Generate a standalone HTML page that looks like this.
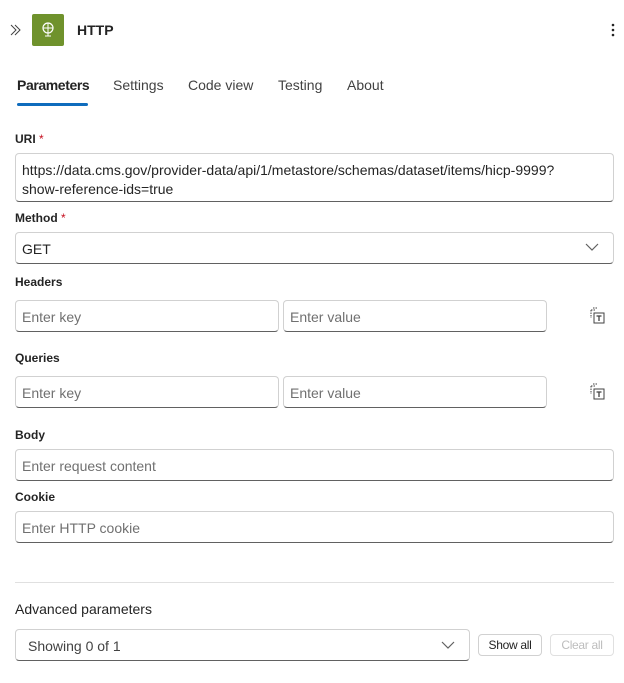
<!DOCTYPE html>
<html><head><style>
body{margin:0;width:624px;height:683px;background:#fff;font-family:"Liberation Sans",sans-serif;color:#242424;position:relative;overflow:hidden}
.a{position:absolute}
.lbl{position:absolute;left:15px;font-size:12px;font-weight:bold;color:#242424}
.lbl span{color:#c50f1f;font-weight:normal}
.in{position:absolute;box-sizing:border-box;border:1px solid #d1d1d1;border-bottom-color:#616161;border-radius:4px;font-size:14px;color:#707070;padding-left:6px;padding-top:2px;display:flex;align-items:center}
.tab{position:absolute;top:77px;font-size:14px;color:#424242}
.ic{position:absolute;width:20px;height:20px}
.btn{position:absolute;top:634px;height:22px;box-sizing:border-box;border:1px solid #d1d1d1;border-radius:4px;font-size:12px;display:flex;align-items:center;justify-content:center;letter-spacing:-0.3px}
</style></head><body>
<svg class="a" style="left:9px;top:24px" width="14" height="12" viewBox="0 0 14 12"><path d="M2 1l5 5-5 5M6 1l5 5-5 5" fill="none" stroke="#424242" stroke-width="1"/></svg>
<div class="a" style="left:32px;top:14px;width:32px;height:32px;background:#6f922c;border-radius:2px"></div>
<svg class="a" style="left:40px;top:21px" width="16" height="18" viewBox="0 0 16 18"><circle cx="8" cy="7" r="5" fill="none" stroke="#fff" stroke-width="1.2"/><path d="M3 7h10M8 2v10M8 12v3M5 15h6" fill="none" stroke="#fff" stroke-width="1"/></svg>
<div class="a" style="left:77px;top:22px;font-size:14px;font-weight:bold">HTTP</div>
<svg class="a" style="left:610px;top:22px" width="6" height="16"><circle cx="3" cy="3" r="1.3" fill="#242424"/><circle cx="3" cy="8" r="1.3" fill="#242424"/><circle cx="3" cy="13" r="1.3" fill="#242424"/></svg>
<div class="tab" style="left:17px;color:#242424;font-weight:bold;letter-spacing:-0.4px">Parameters</div>
<div class="tab" style="left:113px">Settings</div>
<div class="tab" style="left:188px">Code view</div>
<div class="tab" style="left:278px">Testing</div>
<div class="tab" style="left:347px">About</div>
<div class="a" style="left:17px;top:103px;width:71px;height:3px;background:#0f6cbd;border-radius:2px"></div>

<div class="lbl" style="top:132px">URI <span>*</span></div>
<div class="in" style="left:15px;top:153px;width:599px;height:49px;color:#242424;align-items:flex-start;padding-top:7px;line-height:19px">https://data.cms.gov/provider-data/api/1/metastore/schemas/dataset/items/hicp-9999?<br>show-reference-ids=true</div>
<div class="lbl" style="top:211px">Method <span>*</span></div>
<div class="in" style="left:15px;top:232px;width:599px;height:32px;color:#242424">GET</div>
<svg class="a" style="left:585px;top:242px" width="14" height="10"><path d="M1 2l6 6 6-6" fill="none" stroke="#616161" stroke-width="1.2"/></svg>

<div class="lbl" style="top:275px">Headers</div>
<div class="in" style="left:15px;top:300px;width:264px;height:32px">Enter key</div>
<div class="in" style="left:283px;top:300px;width:264px;height:32px">Enter value</div>
<svg class="ic" style="left:588px;top:306px" viewBox="0 0 20 20"><path d="M3 4h5M3 4v8M5 2h4" fill="none" stroke="#424242" stroke-dasharray="1.5 1"/><rect x="6" y="7" width="10" height="10" fill="none" stroke="#424242"/><path d="M8.5 10h5M11 10v5" stroke="#424242" stroke-width="1.3"/></svg>
<div class="lbl" style="top:351px">Queries</div>
<div class="in" style="left:15px;top:376px;width:264px;height:32px">Enter key</div>
<div class="in" style="left:283px;top:376px;width:264px;height:32px">Enter value</div>
<svg class="ic" style="left:588px;top:382px" viewBox="0 0 20 20"><path d="M3 4h5M3 4v8M5 2h4" fill="none" stroke="#424242" stroke-dasharray="1.5 1"/><rect x="6" y="7" width="10" height="10" fill="none" stroke="#424242"/><path d="M8.5 10h5M11 10v5" stroke="#424242" stroke-width="1.3"/></svg>

<div class="lbl" style="top:428px">Body</div>
<div class="in" style="left:15px;top:449px;width:599px;height:32px">Enter request content</div>
<div class="lbl" style="top:490px">Cookie</div>
<div class="in" style="left:15px;top:511px;width:599px;height:32px">Enter HTTP cookie</div>

<div class="a" style="left:15px;top:582px;width:599px;height:1px;background:#e0e0e0"></div>
<div class="a" style="left:15px;top:601px;font-size:14px;color:#242424">Advanced parameters</div>
<div class="in" style="left:15px;top:629px;width:455px;height:32px;padding-left:12px;color:#424242">Showing 0 of 1</div>
<svg class="a" style="left:441px;top:640px" width="14" height="10"><path d="M1 2l6 6 6-6" fill="none" stroke="#616161" stroke-width="1.2"/></svg>
<div class="btn" style="left:478px;width:64px;color:#242424">Show all</div>
<div class="btn" style="left:550px;width:64px;color:#bdbdbd;border-color:#e0e0e0">Clear all</div>
</body></html>
